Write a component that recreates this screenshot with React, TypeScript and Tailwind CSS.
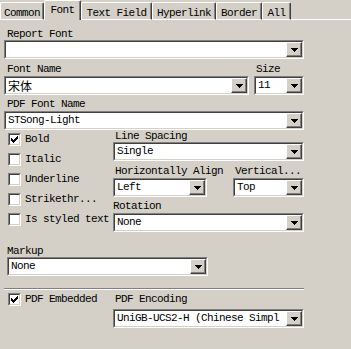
import React from 'react';

const tabs = [
  { label: 'Common', w: 'w-[44px]' },
  { label: 'Font', w: 'w-[37px]', active: true },
  { label: 'Text Field', w: 'w-[71px]' },
  { label: 'Hyperlink', w: 'w-[64px]' },
  { label: 'Border', w: 'w-[46px]' },
  { label: 'All', w: 'w-[29px]' },
];

const Arrow = () => (
  <svg width="7" height="4" viewBox="0 0 7 4" shapeRendering="crispEdges">
    <rect x="0" y="0" width="7" height="1" fill="#000" />
    <rect x="1" y="1" width="5" height="1" fill="#000" />
    <rect x="2" y="2" width="3" height="1" fill="#000" />
    <rect x="3" y="3" width="1" height="1" fill="#000" />
  </svg>
);

const CheckMark = () => (
  <svg width="7" height="7" viewBox="0 0 7 7" shapeRendering="crispEdges">
    {[2, 3, 4, 3, 2, 1, 0].map((y, x) => (
      <rect key={x} x={x} y={y} width="1" height="3" fill="#000" />
    ))}
  </svg>
);

const Combo = ({ w, text, cjk }: { w: string; text?: string; cjk?: boolean }) => (
  <div className={`${w} h-[19px] border border-t-[#808080] border-l-[#808080] border-b-white border-r-white`}>
    <div className="flex h-full items-center bg-white border border-t-[#404040] border-l-[#404040] border-b-[#d4d0c8] border-r-[#d4d0c8]">
      <span
        className={`flex-1 overflow-hidden whitespace-nowrap pl-[2px] leading-[15px] ${
          cjk ? "text-[12px] tracking-normal font-['Noto_Sans_CJK_SC',sans-serif]" : ''
        }`}
      >
        {text}
      </span>
      <div className="flex h-[15px] w-[16px] shrink-0 items-center justify-center bg-[#d4d0c8] border border-t-white border-l-white border-b-[#404040] border-r-[#404040] shadow-[inset_-1px_-1px_0_#808080]">
        <Arrow />
      </div>
    </div>
  </div>
);

const Check = ({ checked, label }: { checked?: boolean; label: string }) => (
  <div className="flex h-[20px] items-start gap-[4px]">
    <div className="h-[13px] w-[13px] shrink-0 border border-t-[#808080] border-l-[#808080] border-b-white border-r-white">
      <div className="flex h-full w-full items-center justify-center bg-white border border-t-[#404040] border-l-[#404040] border-b-[#d4d0c8] border-r-[#d4d0c8]">
        {checked && <CheckMark />}
      </div>
    </div>
    <span className="leading-[13px] whitespace-nowrap">{label}</span>
  </div>
);

const Label = ({ children, className = '' }: { children: React.ReactNode; className?: string }) => (
  <div className={`h-[12px] leading-[12px] whitespace-nowrap ${className}`}>{children}</div>
);

export default function App() {
  return (
    <div className="h-[349px] w-[351px] overflow-hidden bg-[#d4d0c8] text-black text-[11px] tracking-[-0.6px] font-['Liberation_Mono','Noto_Sans_CJK_SC',monospace]">
      {/* Tabs */}
      <div className="flex h-[20px] items-end">
        {tabs.map(t => (
          <div
            key={t.label}
            className={`${t.w} flex justify-center rounded-t-[2px] border-t border-l border-r border-t-white border-l-white border-r-[#404040] shadow-[inset_-1px_0_0_#808080] ${
              t.active ? 'h-[20px] pt-[3px]' : 'h-[18px] border-b border-b-white pt-[4px]'
            }`}
          >
            <span className="leading-[12px]">{t.label}</span>
          </div>
        ))}
        <div className="h-[18px] flex-1 border-b border-b-white" />
      </div>

      <div className="px-[4px]">
        <Label className="mt-[8px] pl-[3px]">Report Font</Label>
        <Combo w="w-[300px]" />

        <div className="mt-[4px] flex">
          <Label className="w-[250px] pl-[3px]">Font Name</Label>
          <Label className="pl-[2px]">Size</Label>
        </div>
        <div className="mt-[1px] flex gap-[5px]">
          <Combo w="w-[245px]" text="宋体" cjk />
          <Combo w="w-[50px]" text="11" />
        </div>

        <Label className="mt-[3px] pl-[3px]">PDF Font Name</Label>
        <div className="mt-[1px]">
          <Combo w="w-[300px]" text="STSong-Light" />
        </div>

        {/* Style checkboxes and alignment */}
        <div className="flex">
          <div className="w-[109px] pl-[4px] pt-[3px]">
            <Check checked label="Bold" />
            <Check label="Italic" />
            <Check label="Underline" />
            <Check label="Strikethr..." />
            <Check label="Is styled text" />
          </div>
          <div className="w-[191px]">
            <Label className="pl-[2px]">Line Spacing</Label>
            <Combo w="w-[191px]" text="Single" />
            <div className="mt-[4px] flex">
              <Label className="w-[120px] pl-[2px]">Horizontally Align</Label>
              <Label className="pl-[2px]">Vertical...</Label>
            </div>
            <div className="mt-[1px] flex gap-[26px]">
              <Combo w="w-[94px]" text="Left" />
              <Combo w="w-[71px]" text="Top" />
            </div>
            <Label className="mt-[3px]">Rotation</Label>
            <div className="mt-[1px]">
              <Combo w="w-[191px]" text="None" />
            </div>
          </div>
        </div>

        <div className="pl-[3px]">
          <Label className="mt-[12px]">Markup</Label>
          <Combo w="w-[201px]" text="None" />
        </div>

        <div className="mt-[12px] h-[2px] w-[300px] border-t border-t-[#808080] border-b border-b-white" />

        <div className="flex">
          <div className="w-[109px] pl-[4px] pt-[3px]">
            <Check checked label="PDF Embedded" />
          </div>
          <div className="w-[191px]">
            <Label className="mt-[3px] pl-[2px]">PDF Encoding</Label>
            <div className="mt-[4px]">
              <Combo w="w-[191px]" text="UniGB-UCS2-H (Chinese Simpl" />
            </div>
          </div>
        </div>
      </div>
    </div>
  );
}
